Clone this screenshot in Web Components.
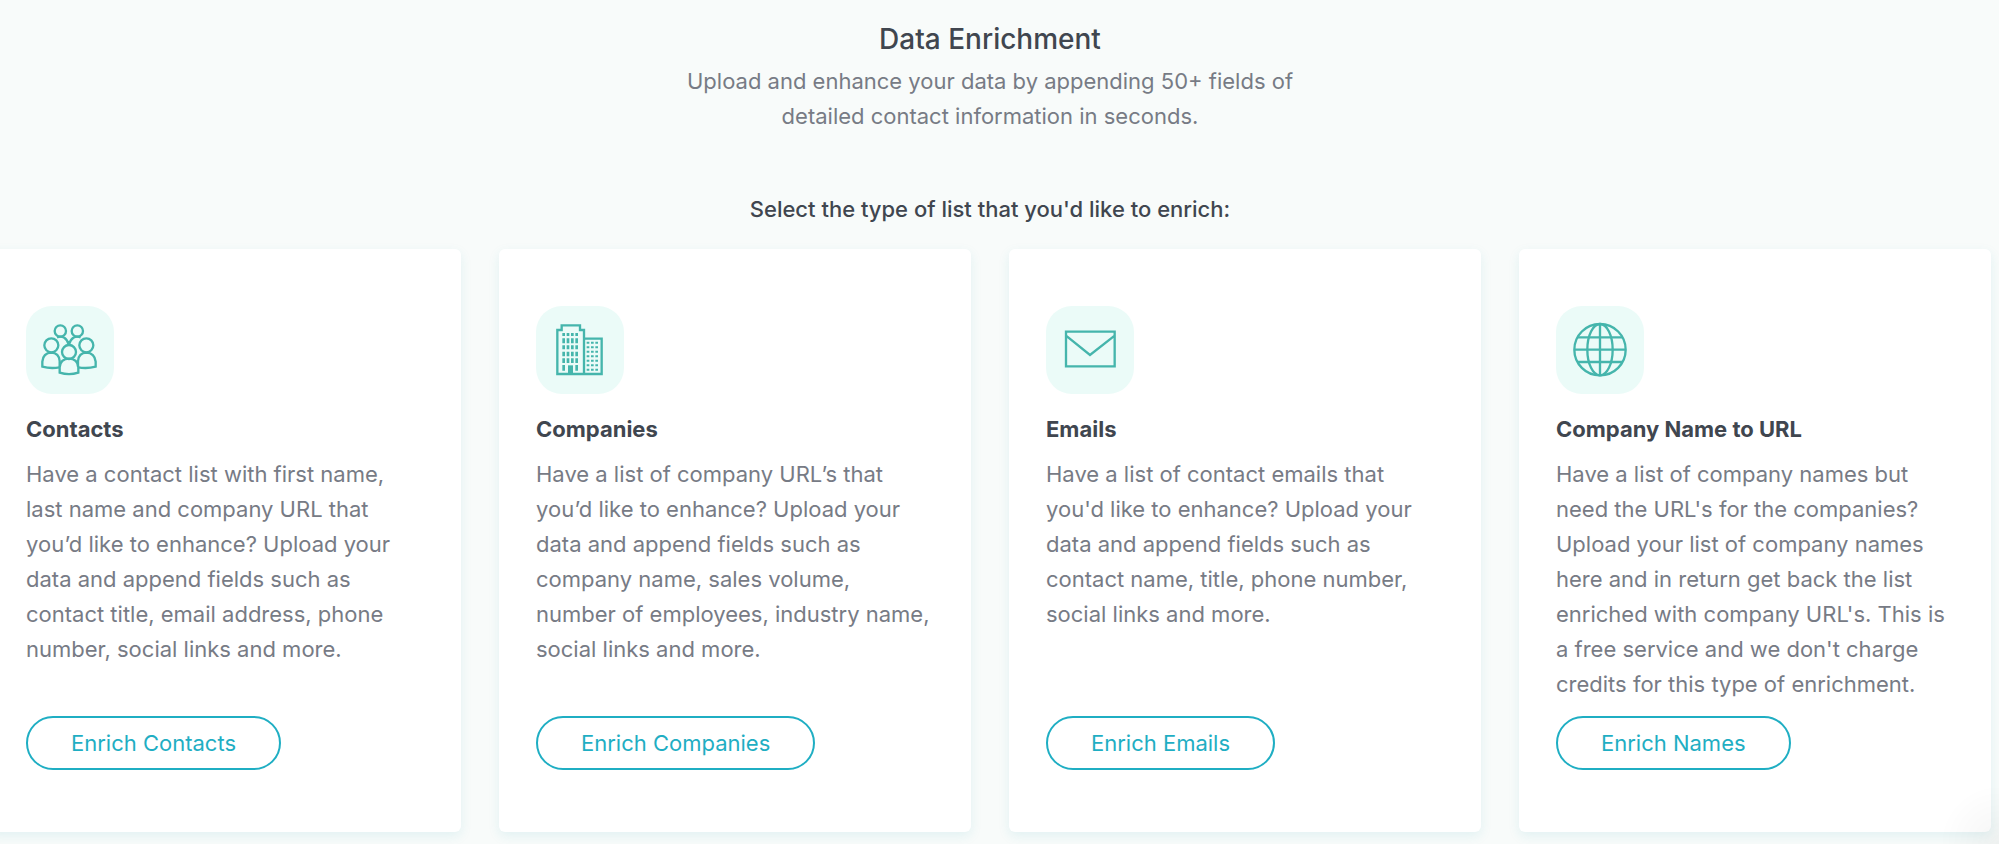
<!DOCTYPE html>
<html lang="en">
<head>
<meta charset="utf-8">
<meta name="viewport" content="width=device-width, initial-scale=1">
<title>Data Enrichment</title>
<style>
:root {
  --bg: #f8fbfa;
  --dark: #40464f;
  --muted: #777b85;
  --accent: #1faec3;
  --icon: #45b5ac;
  --icon-bg: #ebfbf8;
}

body {
  margin: 0;
  min-height: 100vh;
  overflow-x: hidden;
  background: var(--bg);
  color: var(--muted);
  font-family: Inter, "Liberation Sans", sans-serif;
  font-size: 22px;
  line-height: 35px;
}
</style>
</head>
<body>
<enrichment-page>
  <span slot="title">Data Enrichment</span>
  <span slot="intro">Upload and enhance your data by appending 50+ fields of detailed contact information in seconds.</span>
  <span slot="prompt">Select the type of list that you'd like to enrich:</span>

  <enrichment-card icon="contacts" action="Enrich Contacts">
    <span slot="name">Contacts</span>
    Have a contact list with first name, last name and company URL that you’d like to enhance? Upload your data and append fields such as contact title, email address, phone number, social links and more.
  </enrichment-card>
  <enrichment-card icon="companies" action="Enrich Companies">
    <span slot="name">Companies</span>
    Have a list of company URL’s that you’d like to enhance? Upload your data and append fields such as company name, sales volume, number of employees, industry name, social links and more.
  </enrichment-card>
  <enrichment-card icon="emails" action="Enrich Emails">
    <span slot="name">Emails</span>
    Have a list of contact emails that you'd like to enhance? Upload your data and append fields such as contact name, title, phone number, social links and more.
  </enrichment-card>
  <enrichment-card icon="names" action="Enrich Names">
    <span slot="name">Company Name to URL</span>
    Have a list of company names but need the URL's for the companies? Upload your list of company names here and in return get back the list enriched with company URL's. This is a free service and we don't charge credits for this type of enrichment.
  </enrichment-card>
</enrichment-page>

<script>
class EnrichmentIcon extends HTMLElement {
  icons = {
    contacts: `
      <circle cx="103" cy="75" r="17"/>
      <circle cx="154" cy="75" r="17"/>
      <path d="M93 94Q104 89 115 95Q124 101 128 115M164 94Q153 89 142 95Q133 101 129 115"/>
      <circle cx="76" cy="118" r="21"/>
      <circle cx="181" cy="118" r="21"/>
      <path d="M101 182V165Q99 141 76 140Q51 141 49 167V182Q74 189 101 184M156 182V165Q158 141 181 140Q206 141 209 167V182Q183 189 156 184"/>
      <circle cx="129" cy="138" r="21"/>
      <path d="M101 200V184Q103 159 129 158Q155 159 157 184V200Q129 209 101 200Z"/>`,
    companies: `
      <path d="M64 72H77V58H132V72H144V204H64ZM144 98H197V204H144"/>
      <path class="fill" d="M96 178H111V204H96Z"/>
      <path class="windows" d="M83 81V90M96 81V90M109 81V90M122 81V90
        M83 97V112M96 97V112M109 97V112M122 97V112
        M83 118V130M96 118V130M109 118V130M122 118V130
        M83 137V151M96 137V151M109 137V151M122 137V151
        M83 157V171M96 157V171M109 157V171M122 157V171
        M83 177V194M122 177V194"/>
      <path class="panes" d="M152 110H186M152 124H186M152 137H186M152 151H186M152 164H186M152 178H186M152 191H186"/>`,
    emails: `
      <path d="M60 77H206V181H60ZM60 89L132 147L206 89"/>`,
    names: `
      <circle cx="132" cy="131" r="77"/>
      <ellipse cx="132" cy="131" rx="38" ry="77"/>
      <path d="M132 54V208M55 131H209M65 94H199M65 168H199"/>`
  };

  constructor() {
    super();
    const shadow = this.attachShadow({ mode: 'open' });
    shadow.innerHTML = `
<style>
:host {
  display: block;
  width: 88px;
  height: 88px;
  border-radius: 26px;
  background: var(--icon-bg);
}

svg {
  display: block;
  width: 100%;
  height: 100%;
  fill: none;
  stroke: var(--icon);
  stroke-width: 7;
}

.fill {
  fill: var(--icon);
  stroke: none;
}

.windows {
  stroke-width: 8;
}

.panes {
  stroke-dasharray: 8 5;
  stroke-width: 6;
}
</style>
<svg viewBox="0 0 264 264" aria-hidden="true">${this.icons[this.getAttribute("name")]}</svg>
    `;
  }
}

class EnrichmentCard extends HTMLElement {
  constructor() {
    super();
    const shadow = this.attachShadow({ mode: 'open' });
    shadow.innerHTML = `
<style>
:host {
  display: flex;
  flex-direction: column;
  align-items: flex-start;
  box-sizing: border-box;
  min-width: 0;
  padding: 57px 37px 62px;
  border-radius: 6px;
  background: #fff;
  box-shadow: 0 4px 12px #1c9cb01a;
}

h2 {
  margin: 18px 0 10px;
  color: var(--dark);
  font-size: 22px;
  font-weight: 700;
}

p {
  margin: 0 0 14px;
}

button {
  height: 54px;
  margin-top: auto;
  padding: 0 43px;
  border: 2px solid var(--accent);
  border-radius: 27px;
  background: none;
  color: var(--accent);
  font: inherit;
  white-space: nowrap;
  cursor: pointer;
}
</style>
<enrichment-icon name="${this.getAttribute("icon")}"></enrichment-icon>
<h2><slot name="name"></slot></h2>
<p><slot></slot></p>
<button type="button">${this.getAttribute("action")}</button>
    `;
  }
}

class EnrichmentPage extends HTMLElement {
  constructor() {
    super();
    const shadow = this.attachShadow({ mode: 'open' });
    shadow.innerHTML = `
<style>
:host {
  display: block;
  margin: 0 8px 0 -11px;
  padding: 20px 0 11px;
}

header {
  text-align: center;
}

h1, h2, p {
  margin: 0 auto;
}

h1 {
  color: var(--dark);
  font-size: 28px;
  font-weight: 500;
  line-height: 38px;
}

header p {
  max-width: 640px;
  margin-block: 6px 58px;
}

h2 {
  color: var(--dark);
  font-size: 22px;
  font-weight: 500;
}

.cards {
  display: grid;
  grid-template-columns: repeat(4, 1fr);
  gap: 38px;
  margin-top: 22px;

  @media (width < 1400px) {
    grid-template-columns: repeat(2, 1fr);
  }
}

/* faint glow in the bottom corner */
.corner {
  position: fixed;
  right: 0;
  bottom: 0;
  width: 60px;
  height: 60px;
  background: radial-gradient(circle at 100% 100%, #0000000a, #0000 70%);
  pointer-events: none;
}
</style>
<main>
  <header>
    <h1><slot name="title"></slot></h1>
    <p><slot name="intro"></slot></p>
    <h2><slot name="prompt"></slot></h2>
  </header>
  <section class="cards"><slot></slot></section>
</main>
<div class="corner"></div>
    `;
  }
}

window.customElements.define('enrichment-icon', EnrichmentIcon);
window.customElements.define('enrichment-card', EnrichmentCard);
window.customElements.define('enrichment-page', EnrichmentPage);
</script>
</body>
</html>
